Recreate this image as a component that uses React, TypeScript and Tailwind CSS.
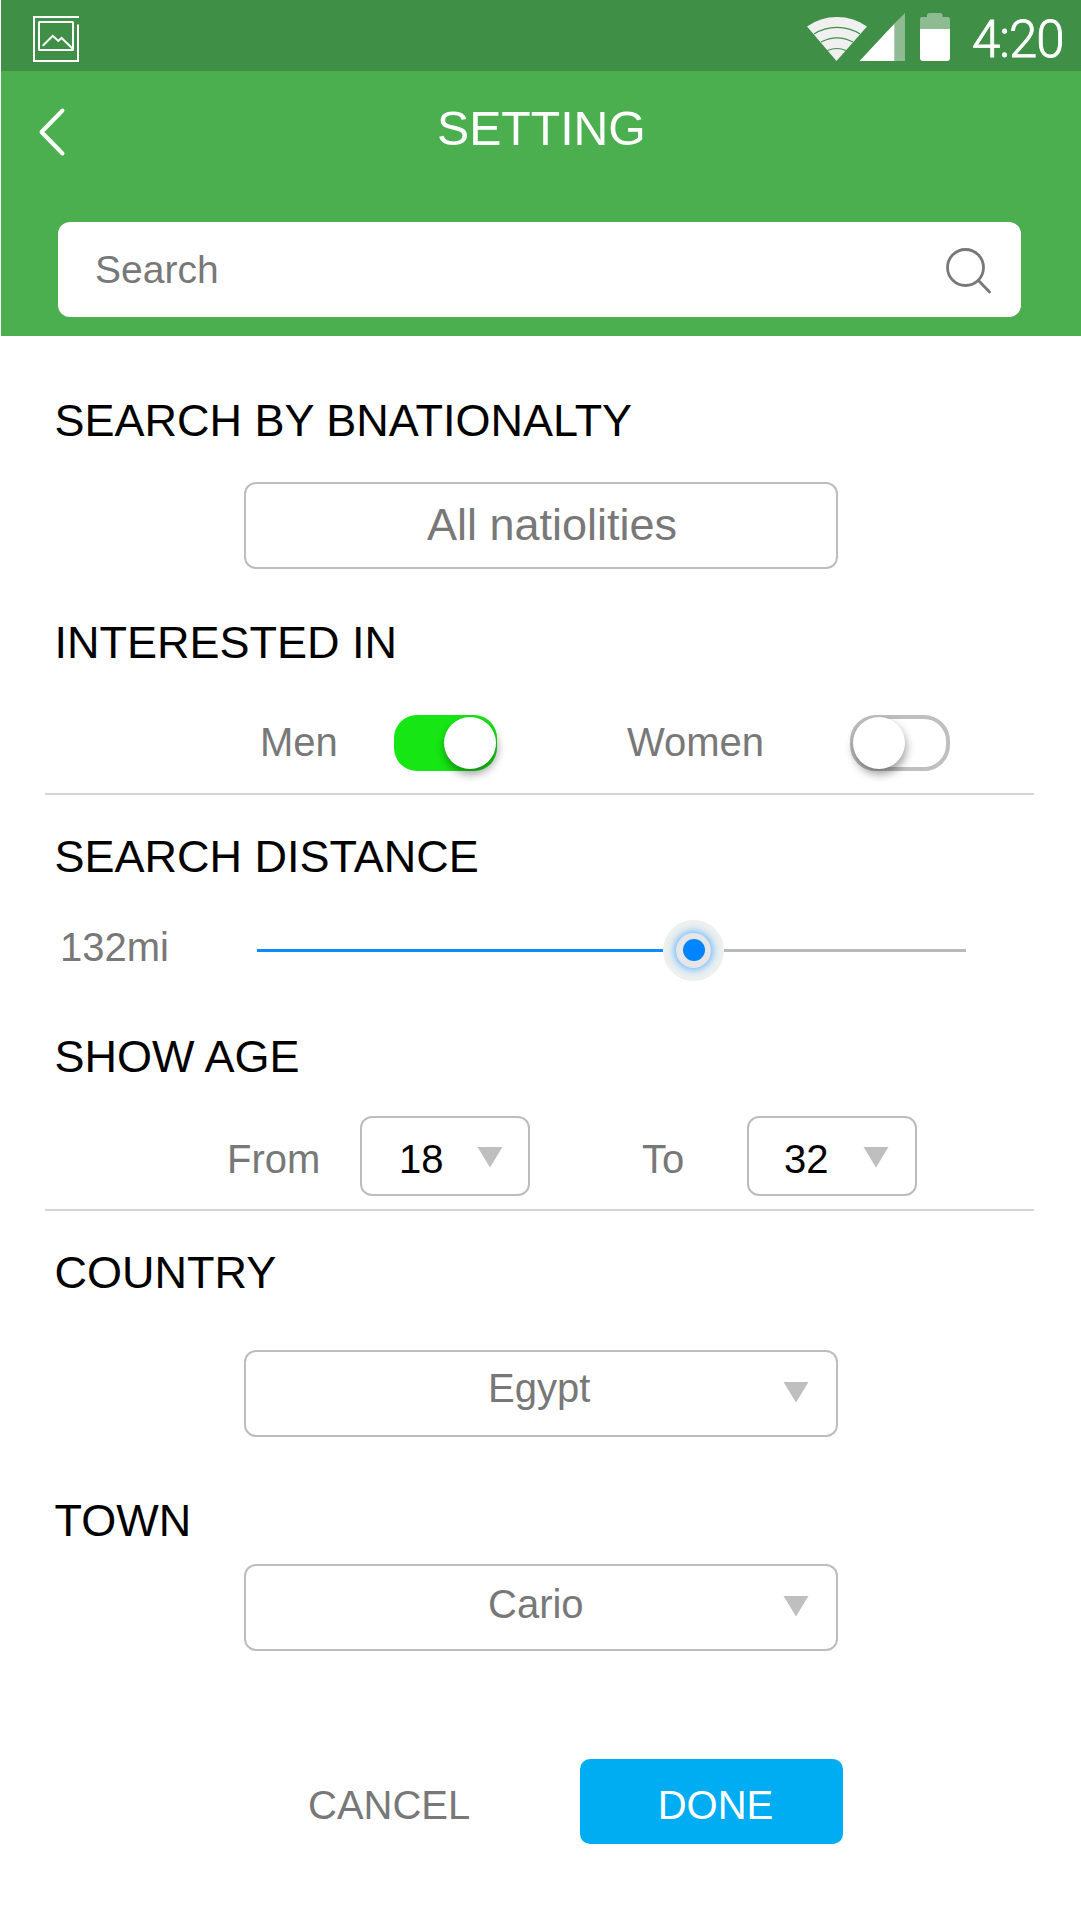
import type { ReactNode } from 'react';

function Heading({ children, className = '' }: { children: ReactNode; className?: string }) {
  return (
    <h2 className={`pl-[53.500px] text-[45px] leading-[52px] whitespace-nowrap text-black ${className}`}>{children}</h2>
  );
}

function Triangle({ className = '' }: { className?: string }) {
  return (
    <svg className={`h-[21px] w-[26px] shrink-0 ${className}`} viewBox="0 0 26 21" fill="#bfbfbf">
      <path d="M0.500 0H25.500L13 20.500Z" />
    </svg>
  );
}

function PictureIcon() {
  return (
    <svg className="mt-4 ml-8 h-[46px] w-[46px]" viewBox="0 0 46 46" fill="none" stroke="#fff" strokeWidth="2">
      <path d="M46 1H1V45H45V8.5" />
      <rect x="6" y="6" width="34" height="28" rx="0.5" />
      <path d="M10.300 29.300L19.700 19.800L25.300 25L28.500 22L39 32" strokeLinecap="round" />
    </svg>
  );
}

function StatusIcons() {
  return (
    <svg className="h-[71px] w-[150px] shrink-0" viewBox="0 0 150 71">
      <path d="M7 26.5Q20 17 37 17Q54 17 67 26.5L36.5 61Z" fill="#f0f0f0" />
      <g fill="none" stroke="#3f8f47" strokeWidth="1.2">
        <path d="M14 34Q24 27.3 37 27.3Q50 27.3 60 34" />
        <path d="M21 42Q29 37.8 37 37.8Q45 37.8 53 42" />
        <path d="M27.5 50.5Q37 46.5 46 50.5" />
      </g>
      <path d="M94.500 23.5L105 13V61H94.500Z" fill="#8fbb92" />
      <path d="M59.500 61L94.500 23.500V61Z" fill="#fff" />
      <path d="M120 29V19Q120 17 122 17H127V15.500Q127 13 129.500 13H140Q142.500 13 142.500 15.500V17H148Q150 17 150 19V29Z" fill="#8fbb92" />
      <path d="M120 29H150V58Q150 61 147 61H123Q120 61 120 58Z" fill="#fff" />
    </svg>
  );
}

function Toggle({ on }: { on: boolean }) {
  return (
    <div
      className={
        on
          ? 'flex h-14 w-[103px] items-center justify-end rounded-[23px] bg-[#16e614] pr-px'
          : 'flex h-14 w-[100px] items-center rounded-[26px] border-4 border-[#bfbfbf]'
      }
    >
      <div
        className={
          on
            ? 'h-[52px] w-[52px] shrink-0 rounded-full bg-white shadow-[1px_5px_10px_rgba(0,0,0,0.4)]'
            : '-ml-px h-[52px] w-[52px] shrink-0 rounded-full bg-white shadow-[1px_5px_10px_rgba(0,0,0,0.4)]'
        }
      />
    </div>
  );
}

function AgeSelect({ value, textClass }: { value: string; textClass: string }) {
  return (
    <div className="flex h-20 w-[170px] shrink-0 rounded-[12px] border-2 border-[#bdbdbd]">
      <span className={`pt-[18px] text-[40px] leading-[46px] text-black ${textClass}`}>{value}</span>
      <Triangle className="mt-[29px] ml-[33px]" />
    </div>
  );
}

function PlaceSelect({ value, className = '', textClass = '' }: { value: string; className?: string; textClass?: string }) {
  return (
    <div className={`ml-[243px] flex w-[594px] justify-between rounded-[12px] border-2 border-[#bdbdbd] ${className}`}>
      <span className={`ml-[242px] text-[40px] leading-[46px] ${textClass}`}>{value}</span>
      <Triangle className="mt-[30px] mr-[27px]" />
    </div>
  );
}

export default function App() {
  return (
    <div className="h-[1921px] w-[1081px] overflow-hidden bg-white pl-px font-['Liberation_Sans',Arial,sans-serif] text-[#787878]">
      <div className="flex h-[71px] justify-between bg-[#3f8f47]">
        <PictureIcon />
        <div className="flex w-[281px]">
          <StatusIcons />
          <span className="ml-[22px] pt-[10px] font-['Roboto',sans-serif] text-[51px] leading-[60px] font-light tracking-[-1px] text-white [-webkit-text-stroke:0.8px_#fff]">4:20</span>
        </div>
      </div>

      <header className="h-[265px] bg-[#4baf4f]">
        <div className="flex h-[151px]">
          <svg className="mt-[36px] ml-[37px] h-[50px] w-[28px]" viewBox="0 0 28 50" fill="none" stroke="#fff" strokeWidth="4" strokeLinecap="round" strokeLinejoin="round">
            <path d="M24.500 3.500L3.500 25L24.500 46.500" />
          </svg>
          <h1 className="mt-[29px] ml-[371px] text-[48.200px] leading-[56px] text-white">SETTING</h1>
        </div>
        <div className="ml-[57px] flex h-[95px] w-[963px] justify-between rounded-[12px] bg-white">
          <span className="ml-[37px] pt-[25px] text-[39px] leading-[46px]">Search</span>
          <svg className="mt-[25px] mr-[29px] h-[48px] w-[48px]" viewBox="0 0 48 48" fill="none" stroke="#787878" strokeWidth="2.8" strokeLinecap="round">
            <circle cx="21.500" cy="20.500" r="18" />
            <path d="M34.500 33.500L45.500 45" />
          </svg>
        </div>
      </header>

      <main>
        <Heading className="pt-[59px]">SEARCH BY BNATIONALTY</Heading>
        <div className="mt-[35px] ml-[243px] h-[87px] w-[594px] rounded-[12px] border-2 border-[#bdbdbd] pt-[15px] pl-[181px] text-[45px] leading-[52px]">
          All natiolities
        </div>

        <Heading className="pt-[48px]">INTERESTED IN</Heading>
        <div className="mt-[46px] flex h-14 text-[40px] leading-[46px]">
          <span className="ml-[259px] w-[134px] pt-[4px]">Men</span>
          <Toggle on />
          <span className="ml-[130px] w-[223px] pt-[4px]">Women</span>
          <Toggle on={false} />
        </div>
        <div className="mt-[22px] ml-[44px] h-0.5 w-[989px] bg-[#d5d5d5]" />

        <Heading className="pt-[36px]">SEARCH DISTANCE</Heading>
        <div className="mt-[36px] flex h-[62px] items-center">
          <span className="-mt-[6px] ml-[59px] w-[197px] text-[40px] leading-[46px]">132mi</span>
          <div className="h-[3px] w-[406px] bg-[#0c8bff]" />
          <div className="flex h-[61px] w-[61px] items-center justify-center rounded-full bg-[#edf0ef]">
            <div className="flex h-[35px] w-[35px] items-center justify-center rounded-full bg-[#e6e6e8] shadow-[0_0_8px_1px_#4aaaff]">
              <div className="h-[22px] w-[22px] rounded-full bg-[#0084ff]" />
            </div>
          </div>
          <div className="h-[3px] w-[242px] bg-[#b8babb]" />
        </div>

        <Heading className="pt-[50px]">SHOW AGE</Heading>
        <div className="mt-[33px] flex h-20 text-[40px] leading-[46px]">
          <span className="ml-[226px] w-[133px] pt-[20px]">From</span>
          <AgeSelect value="18" textClass="ml-[37px] w-[45px]" />
          <span className="ml-[112px] w-[105px] pt-[20px]">To</span>
          <AgeSelect value="32" textClass="ml-[35px] w-[46px]" />
        </div>
        <div className="mt-[13px] ml-[44px] h-0.5 w-[989px] bg-[#d5d5d5]" />

        <Heading className="pt-[36px]">COUNTRY</Heading>
        <PlaceSelect value="Egypt" className="mt-[51px] h-[87px]" textClass="pt-[13px]" />
        <Heading className="pt-[58px]">TOWN</Heading>
        <PlaceSelect value="Cario" className="mt-[17px] h-[87px]" textClass="pt-[15px]" />

        <div className="mt-[108px] flex h-[85px] text-[40px] leading-[46px]">
          <button className="ml-[307px] w-[164px] pt-[6px] text-left">CANCEL</button>
          <button className="ml-[108px] w-[263px] rounded-[10px] bg-[#00adf2] pt-[6px] pl-[8px] text-white">DONE</button>
        </div>
      </main>
    </div>
  );
}
